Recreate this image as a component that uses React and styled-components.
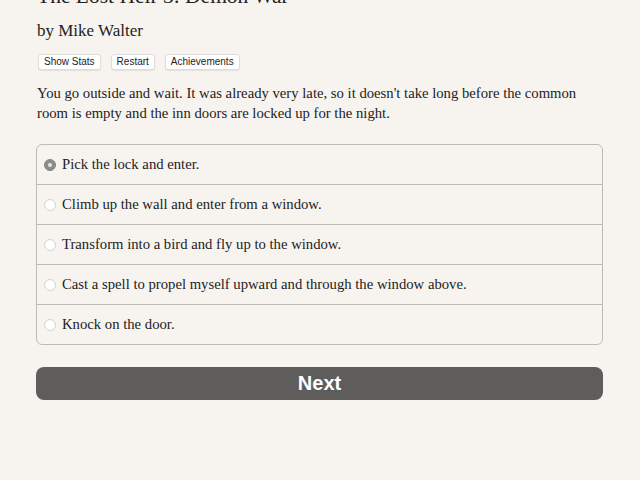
import React, { useState } from 'react'
import styled, { createGlobalStyle } from 'styled-components'

const GlobalStyle = createGlobalStyle`
  html, body {
    margin: 0;
    padding: 0;
    background: #f7f4f0;
    overflow: hidden;
  }
`

const Page = styled.main`
  box-sizing: border-box;
  padding: 0 37px 0 36px;
  margin-top: -18px;
  font-family: "Liberation Serif", "DejaVu Serif", serif;
  color: #222;
`

const Title = styled.h1`
  margin: 0 0 0 1px;
  font-size: 21.5px;
  font-weight: normal;
  line-height: 28px;
`

const Byline = styled.h2`
  margin: 10px 0 0 1px;
  font-size: 17px;
  font-weight: normal;
  line-height: 22px;
`

const ButtonBar = styled.div`
  display: flex;
  gap: 10px;
  margin-top: 12px;
  padding-left: 2px;
`

const MetaButton = styled.button`
  font-family: "Liberation Sans", Arial, sans-serif;
  font-size: 10px;
  line-height: 12px;
  color: #222;
  background: #fff;
  border: 1px solid #ddd;
  border-radius: 3px;
  padding: 1px 5px;
  box-shadow: 0 1px 1px rgba(0, 0, 0, 0.08);
`

const Passage = styled.p`
  margin: 13px 0 0 1px;
  font-size: 14.7px;
  line-height: 20px;
`

const ChoiceList = styled.form`
  margin-top: 21px;
  border: 1px solid #bdbbb8;
  border-radius: 6px;
  overflow: hidden;
`

const ChoiceRow = styled.label`
  display: flex;
  align-items: center;
  gap: 6px;
  height: 39px;
  padding: 0 7px;
  font-size: 14.7px;
  border-top: ${p => (p.first ? 'none' : '1px solid #bdbbb8')};
  cursor: pointer;
`

const Radio = styled.span`
  box-sizing: border-box;
  flex: none;
  width: 12px;
  height: 12px;
  border-radius: 50%;
  margin-top: 1px;
  background: ${p => (p.checked ? '#8d8c8a' : '#fff')};
  border: 1px solid ${p => (p.checked ? '#858482' : '#d4d2cf')};
  position: relative;

  &::after {
    content: '';
    display: ${p => (p.checked ? 'block' : 'none')};
    position: absolute;
    left: 3px;
    top: 3px;
    width: 4px;
    height: 4px;
    border-radius: 50%;
    background: #e8e7e5;
  }
`

const NextButton = styled.button`
  display: block;
  width: 100%;
  height: 33px;
  margin-top: 22px;
  border: none;
  border-radius: 8px;
  background: #5e5d5b;
  color: #fff;
  font-family: "Liberation Sans", Arial, sans-serif;
  font-weight: bold;
  font-size: 20px;
  cursor: pointer;
`

const choices = [
  'Pick the lock and enter.',
  'Climb up the wall and enter from a window.',
  'Transform into a bird and fly up to the window.',
  'Cast a spell to propel myself upward and through the window above.',
  'Knock on the door.',
]

export default function App() {
  const [picked, setPicked] = useState(0)

  return (
    <>
      <GlobalStyle />
      <Page>
        <Title>The Lost Heir 3: Demon War</Title>
        <Byline>by Mike Walter</Byline>
        <ButtonBar>
          <MetaButton>Show Stats</MetaButton>
          <MetaButton>Restart</MetaButton>
          <MetaButton>Achievements</MetaButton>
        </ButtonBar>
        <Passage>
          You go outside and wait. It was already very late, so it doesn't take long before the common
          room is empty and the inn doors are locked up for the night.
        </Passage>
        <ChoiceList>
          {choices.map((text, i) => (
            <ChoiceRow key={i} first={i === 0} onClick={() => setPicked(i)}>
              <Radio checked={picked === i} />
              {text}
            </ChoiceRow>
          ))}
        </ChoiceList>
        <NextButton>Next</NextButton>
      </Page>
    </>
  )
}
